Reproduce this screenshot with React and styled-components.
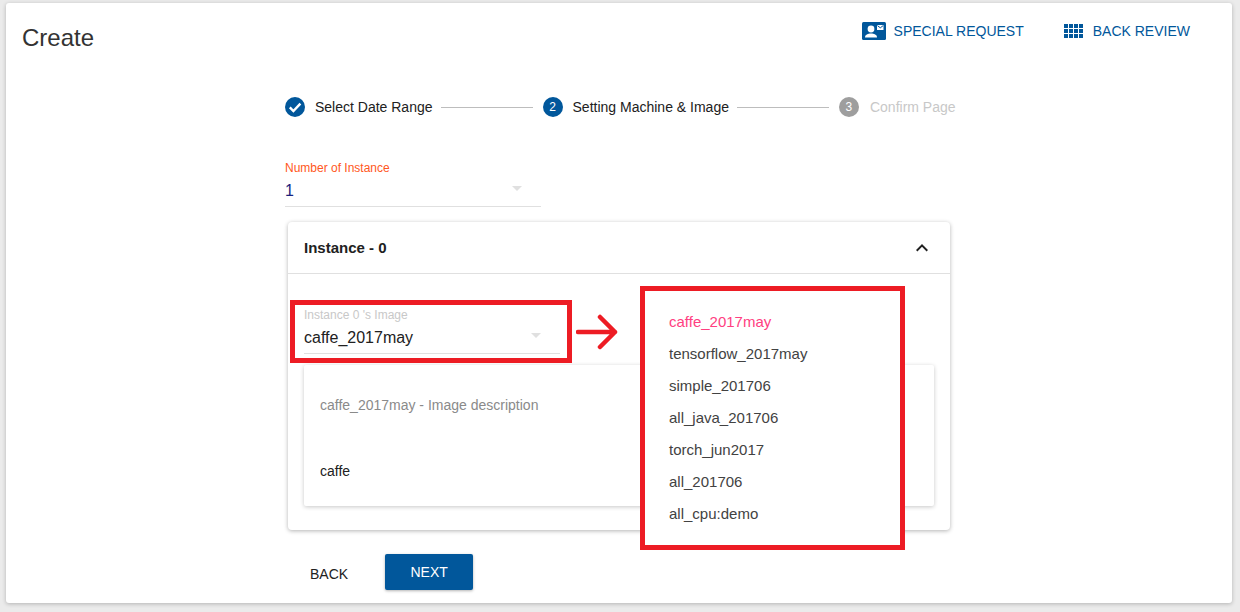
import React from "react";
import styled, { createGlobalStyle } from "styled-components";

const GlobalStyle = createGlobalStyle`
  html, body {
    margin: 0;
    padding: 0;
    height: 612px;
    overflow: hidden;
    background: #ebebeb;
    font-family: "Liberation Sans", Arial, sans-serif;
  }
`;

const images = [
  "caffe_2017may",
  "tensorflow_2017may",
  "simple_201706",
  "all_java_201706",
  "torch_jun2017",
  "all_201706",
  "all_cpu:demo",
];

export default function App() {
  return (
    <>
      <GlobalStyle />
      <Paper>
        <Header>
          <Title>Create</Title>
          <HeaderActions>
            <HeaderLink $gap={8}>
              <svg width="24" height="18" viewBox="0 0 24 18">
                <rect width="24" height="18" rx="1.5" fill="#01579b" />
                <circle cx="9" cy="7" r="3.4" fill="#fff" />
                <path d="M3 15.5c0-3 3-4 6-4s6 1 6 4z" fill="#fff" />
                <rect x="15" y="3" width="6.5" height="5" fill="#fff" />
                <path d="M15.4 3.6l2.9 2.2 2.9-2.2" fill="none" stroke="#01579b" strokeWidth="1" />
              </svg>
              SPECIAL REQUEST
            </HeaderLink>
            <HeaderLink $gap={10}>
              <svg width="19" height="15" viewBox="0 0 19 15">
                {[0, 5, 10].map((y) =>
                  [0, 5, 10, 15].map((x) => (
                    <rect key={`${x}-${y}`} x={x} y={y} width="4" height="4" fill="#01579b" />
                  ))
                )}
              </svg>
              BACK REVIEW
            </HeaderLink>
          </HeaderActions>
        </Header>

        <Content>
          <Stepper>
            <Step>
              <svg width="24" height="24" viewBox="0 0 24 24">
                <circle cx="12" cy="12" r="10" fill="#01579b" />
                <path d="M6.8 12.4l3.6 3.6 7-7.4" fill="none" stroke="#fff" strokeWidth="2.4" />
              </svg>
              <StepLabel>Select Date Range</StepLabel>
            </Step>
            <StepLine />
            <Step>
              <StepNumber>2</StepNumber>
              <StepLabel>Setting Machine &amp; Image</StepLabel>
            </Step>
            <StepLine />
            <Step>
              <StepNumber $disabled>3</StepNumber>
              <StepLabel $disabled>Confirm Page</StepLabel>
            </Step>
          </Stepper>

          <NumberField>
            <FieldLabel $color="#ff5722">Number of Instance</FieldLabel>
            <NumberValue>1</NumberValue>
            <Caret />
          </NumberField>

          <Card>
            <CardHeader>
              <CardTitle>Instance - 0</CardTitle>
              <svg width="24" height="24" viewBox="0 0 24 24">
                <path d="M7.41 15.41 12 10.83l4.59 4.58L18 14l-6-6-6 6z" fill="#212121" />
              </svg>
            </CardHeader>
            <CardBody>
              <ImageField>
                <FieldLabel $color="#c8c8c8">Instance 0 's Image</FieldLabel>
                <ImageValue>caffe_2017may</ImageValue>
                <Caret />
              </ImageField>
              <InnerCard>
                <Description>caffe_2017may - Image description</Description>
                <ImageName>caffe</ImageName>
              </InnerCard>
            </CardBody>
          </Card>

          <Buttons>
            <BackButton>BACK</BackButton>
            <NextButton>NEXT</NextButton>
          </Buttons>
        </Content>

        <FieldHighlight />
        <ArrowMark width="46" height="40" viewBox="0 0 46 40">
          <path
            d="M2 19h37M24 4l15 15-15 15"
            fill="none"
            stroke="#ed1c24"
            strokeWidth="4.5"
            strokeLinecap="round"
            strokeLinejoin="round"
          />
        </ArrowMark>
        <MenuCallout>
          {images.map((name, i) => (
            <MenuItem key={name} $active={i === 0}>
              {name}
            </MenuItem>
          ))}
        </MenuCallout>
      </Paper>
    </>
  );
}

const Paper = styled.div`
  position: relative;
  box-sizing: border-box;
  width: 1226px;
  height: 600px;
  margin: 3px 0 0 6px;
  background: #fff;
  border-radius: 3px;
  box-shadow: 0 1px 4px rgba(0, 0, 0, 0.24);
  overflow: hidden;
`;

const Header = styled.div`
  display: flex;
  justify-content: space-between;
  padding: 0 42px 0 16px;
  height: 72px;
`;

const Title = styled.h1`
  margin: 21px 0 0;
  font-size: 24px;
  line-height: 28px;
  font-weight: 400;
  color: #333;
`;

const HeaderActions = styled.div`
  display: flex;
  gap: 40px;
  padding-top: 18px;
  height: 20px;
`;

const HeaderLink = styled.a`
  display: flex;
  align-items: center;
  gap: ${(p) => p.$gap}px;
  font-size: 14px;
  color: #01579b;
`;

const Content = styled.div`
  width: 680px;
  margin-left: 279px;
`;

const Stepper = styled.div`
  display: flex;
  align-items: center;
  height: 24px;
  margin-top: 20px;
`;

const Step = styled.div`
  display: flex;
  align-items: center;
  gap: 8px;
  margin-left: -2px;
`;

const StepNumber = styled.span`
  display: flex;
  align-items: center;
  justify-content: center;
  width: 20px;
  height: 20px;
  margin: 0 2px;
  border-radius: 50%;
  font-size: 12px;
  color: #fff;
  background: ${(p) => (p.$disabled ? "#9e9e9e" : "#01579b")};
`;

const StepLabel = styled.span`
  margin-left: ${(p) => (p.$disabled ? "1px" : "0")};
  font-size: 14px;
  color: ${(p) => (p.$disabled ? "#c8c8c8" : "#212121")};
`;

const StepLine = styled.div`
  width: 92px;
  height: 1px;
  margin: 0 10px 0 8px;
  background: #bdbdbd;
`;

const NumberField = styled.div`
  position: relative;
  box-sizing: border-box;
  width: 256px;
  height: 46px;
  margin-top: 42px;
  border-bottom: 1px solid #e0e0e0;
`;

const FieldLabel = styled.div`
  font-size: 12px;
  line-height: 14px;
  color: ${(p) => p.$color};
`;

const NumberValue = styled.div`
  margin-top: 6px;
  font-size: 16px;
  line-height: 20px;
  color: #1a237e;
`;

const Caret = styled.span`
  position: absolute;
  right: 19px;
  bottom: 15px;
  border-left: 5px solid transparent;
  border-right: 5px solid transparent;
  border-top: 5px solid #e0e0e0;
`;

const Card = styled.div`
  box-sizing: border-box;
  width: 662px;
  height: 308px;
  margin: 15px 0 0 3px;
  border-radius: 4px;
  box-shadow: 0 1px 4px rgba(0, 0, 0, 0.3);
`;

const CardHeader = styled.div`
  box-sizing: border-box;
  display: flex;
  align-items: center;
  justify-content: space-between;
  height: 52px;
  padding: 0 16px;
  border-bottom: 1px solid #e0e0e0;
`;

const CardTitle = styled.div`
  font-size: 15px;
  font-weight: 700;
  color: #212121;
`;

const CardBody = styled.div`
  padding: 34px 16px 0;
`;

const ImageField = styled.div`
  position: relative;
  box-sizing: border-box;
  width: 256px;
  height: 46px;
  border-bottom: 1px solid #e0e0e0;
`;

const ImageValue = styled.div`
  margin-top: 5px;
  font-size: 16px;
  line-height: 22px;
  color: #212121;
`;

const InnerCard = styled.div`
  box-sizing: border-box;
  height: 141px;
  margin-top: 11px;
  padding: 32px 16px 0;
  border-radius: 2px;
  box-shadow: 0 1px 4px rgba(0, 0, 0, 0.22);
`;

const Description = styled.div`
  font-size: 14px;
  line-height: 16px;
  color: #8a8a8a;
`;

const ImageName = styled.div`
  margin-top: 50px;
  font-size: 14px;
  line-height: 16px;
  color: #212121;
`;

const Buttons = styled.div`
  display: flex;
  align-items: flex-start;
  gap: 37px;
  margin: 24px 0 0 25px;
`;

const BackButton = styled.div`
  padding-top: 12px;
  font-size: 14px;
  line-height: 16px;
  color: #212121;
`;

const NextButton = styled.div`
  display: flex;
  align-items: center;
  justify-content: center;
  width: 88px;
  height: 36px;
  border-radius: 2px;
  font-size: 14px;
  color: #fff;
  background: #01579b;
  box-shadow: 0 1px 3px rgba(0, 0, 0, 0.3);
`;

// annotations drawn on top of the screenshot
const FieldHighlight = styled.div`
  position: absolute;
  left: 284px;
  top: 297px;
  box-sizing: border-box;
  width: 282px;
  height: 63px;
  border: 5px solid #ed1c24;
`;

const ArrowMark = styled.svg`
  position: absolute;
  left: 570px;
  top: 310px;
`;

const MenuCallout = styled.div`
  position: absolute;
  left: 634px;
  top: 283px;
  box-sizing: border-box;
  width: 265px;
  height: 264px;
  padding: 15px 24px;
  border: 5px solid #ed1c24;
  background: #fff;
`;

const MenuItem = styled.div`
  height: 32px;
  font-size: 15px;
  line-height: 32px;
  color: ${(p) => (p.$active ? "#ff4081" : "#424242")};
`;
